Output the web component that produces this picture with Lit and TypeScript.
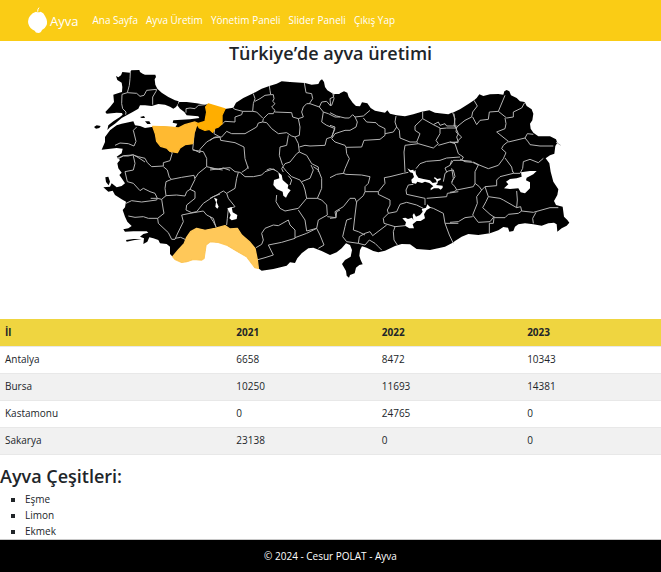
import { LitElement, html, svg, css } from "lit";
import { customElement } from "lit/decorators.js";

interface Sheet {
  x: number;
  y: number;
  borders: string[];
}

// Moves a list of "x,y" points from a map sheet to the full map.
const place = (dx: number, dy: number, points: string): string =>
  points
    .split(" ")
    .map((p) => {
      const [x, y] = p.split(",").map(Number);
      return `${x + dx},${y + dy}`;
    })
    .join(" ");

const thrace = place(270, 186,
  "78,42 85,46 93,40 97,30 120,32 124,25 148,24 150,30 158,35 165,38 196,38 198,45 194,52 196,68 202,80 215,92 235,105 255,115 266,118 264,125 258,135 250,140 240,134 225,128 205,126 185,132 165,130 150,130 145,140 128,150 110,160 95,168 75,185 60,196 52,204 55,190 70,178 90,165 98,158 96,153 80,152 50,155 46,150 60,135 72,120 70,98 88,92 96,90 97,75 95,62 82,54");

const anatolia = [
  place(270, 186, "268,120 290,120 320,124 345,128 355,126 390,138"),
  place(630, 186, "45,141 70,137 78,122 100,108 130,94 155,80 178,72 200,65 215,58 240,60 285,63 305,68 325,66 330,56 336,52 342,60 345,75 352,85 370,96 388,96"),
  place(990, 186, "30,94 42,88 52,92 56,105 68,122 78,132 90,133 96,121 112,124 122,138 135,146 165,152 172,145 180,155 200,160 225,163 250,157 275,149 298,145 315,152 355,157 365,152"),
  place(1350, 246, "8,92 30,82 55,66 72,55 80,48 88,37 100,42 120,37 145,36 160,38 163,28 170,24 178,28 183,40 200,48 210,58 224,60 230,72 245,82 250,95 247,115 240,125 242,140 250,152 265,163 300,163 318,172 322,182 316,192 313,215 300,220"),
  place(1350, 465, "287,10 298,25 302,50 310,80 325,103 322,120 312,138 318,150 338,155 342,185 352,195 358,203 350,212 335,220 322,230 320,208 312,203 295,205 275,212 250,208 225,205 205,208 195,215 190,228 178,230 174,218 160,216 145,226 120,235 85,240 55,237 35,245 15,258 8,263"),
  place(990, 495, "345,245 300,255 260,252 240,238 215,237 195,243 165,257 145,262 130,258 110,248 96,244 90,255 88,272 92,285 98,298 88,300 78,308 74,325 60,330 57,338 50,332 48,318 36,297 45,285 62,275 66,255 60,240 48,235 35,250 20,262 0,270"),
  place(630, 495, "335,258 310,248 295,250 275,265 262,280 255,294 240,292 230,302 190,312 155,317 145,310 135,308 125,295 110,275 80,258 50,240 25,232 0,230"),
  place(270, 450, "348,285 342,325 335,330 310,328 290,335 275,337 255,328 248,320 240,312 240,290 230,282 210,280 205,270 190,265 178,262 172,275 160,282 162,265 150,260 160,252 175,248 170,244 130,244 105,245 100,238 115,235 125,228 112,215 105,200 98,180 105,172 108,155 95,148 75,135 68,122 55,125 40,112 60,110 65,100 80,112 95,108 105,100 95,85 88,75 95,68 85,55 82,40 90,30 80,20 95,10"),
  place(270, 186, "98,260 80,258 35,263 45,240 45,225 60,205 80,190 95,185 130,178 135,190 150,192 165,198 185,195 200,193 235,195 255,198 262,185 248,182 250,175 275,173 300,172 328,168 325,163 290,160 283,150 270,140 262,130"),
].join(" ");

const islands = [
  place(270, 186, "12,195 20,190 32,192 28,198 18,200"),
  place(270, 186, "150,165 162,162 165,168 155,168"),
  place(270, 186, "165,178 178,178 182,186 172,186"),
  place(270, 450, "46,82 55,80 60,95 56,106 48,96"),
  place(270, 450, "108,270 130,267 155,267 130,271 110,275"),
];

const lakes = [
  place(1350, 465, "162,100 175,88 168,80 180,72 200,70 215,65 213,52 240,48 260,48 250,58 230,68 228,76 240,82 240,100 225,115 212,112 205,100 180,102"),
  place(630, 495, "205,22 215,30 218,45 235,60 233,70 242,76 234,86 228,98 220,92 218,80 200,72 190,60 192,45 208,40"),
  place(630, 495, "12,98 22,102 20,112 26,125 22,131 16,125 18,112"),
  place(630, 495, "52,130 65,126 68,142 82,150 80,162 65,166 58,160 62,150"),
  place(990, 495, "232,10 242,16 250,14 252,20 256,14 258,28 265,38 280,42 300,46 308,54 320,52 318,44 312,40 314,36 322,42 332,40 332,44 324,48 322,56 318,60 338,62 338,68 332,74 326,70 312,70 302,76 302,70 310,64 298,54 285,50 276,54 262,50 258,56 246,54 244,44 252,36 248,24 240,22"),
  place(990, 495, "217,160 226,158 234,162 246,158 250,165 248,150 252,145 258,155 270,150 278,140 275,132 288,128 292,118 302,128 290,135 282,148 285,160 272,168 260,168 248,178 252,190 238,190 225,182 228,172"),
];

const producers = [
  {
    name: "bursa",
    points: place(270, 186, "188,193 235,195 265,198 285,188 315,180 322,183 312,215 308,245 285,248 270,258 262,272 240,268 230,258 212,253 200,238 196,215"),
  },
  {
    name: "sakarya",
    points: place(270, 186, "355,126 375,132 405,141 396,160 396,185 385,195 375,198 368,211 358,202 345,205 328,198 320,186 345,178 350,150 347,135"),
  },
  {
    name: "antalya",
    points: place(270, 450, "248,320 265,300 283,280 290,262 302,245 320,235 345,241 375,235 405,227 420,237 442,235 455,255 480,277 495,295 502,330 505,355 495,353 485,340 470,320 440,303 410,285 385,277 360,275 348,285 342,325 335,330 310,328 290,335 275,337 255,328"),
  },
];

const sheets: Sheet[] = [
  { x: 270, y: 186, borders: [
    "121,30 120,50 118,70 112,92 96,97 95,125 98,140 108,150 107,158",
    "112,92 140,94 150,103 162,100 170,85 200,82 198,88 188,105 188,128",
    "288,152 288,140 300,138 315,140 325,130 345,128",
    "75,250 90,243 115,245 132,252 138,238 130,205 140,195",
    "320,185 312,215 310,245 308,262 330,272 330,262 350,240 370,228 390,225",
    "85,290 100,282 115,282 130,278 150,290 165,300",
  ] },
  { x: 270, y: 450, borders: [
    "82,25 100,17 128,15 145,20 165,25 172,38 185,50 220,48 220,38 240,32 247,8 235,0",
    "130,18 135,40 130,60 105,65 112,95 130,100 150,122 160,115 180,125 195,130 202,145 182,145",
    "108,160 125,152 155,156 200,150 202,145 215,148",
    "228,137 225,115 228,95 245,88 275,82 312,76 315,88 300,118 290,125 285,138 260,135 228,137 215,148",
    "220,50 232,60 238,82 245,88",
    "300,118 315,125 315,145 290,165 288,180 305,188 320,185 340,160 370,140 390,132",
    "215,148 220,180 222,190 203,205 205,220 235,248 245,268 255,268 262,252 280,215 275,195 300,190 340,183 350,195 370,205 378,232",
    "115,198 135,202 160,200 175,205 203,205",
    "255,265 272,262 285,268",
    "308,0 340,5 350,25 350,50 385,58 398,60",
    "350,50 325,70 315,85",
  ] },
  { x: 630, y: 186, borders: [
    "130,95 135,110 130,125 128,148 98,148 75,142 68,137",
    "98,148 95,158 75,165 75,180 45,178 38,185",
    "178,72 180,85 182,98 165,100 150,110 135,118",
    "182,98 190,98 192,110 188,118 195,125 185,135 195,145 190,155 175,155 160,170 158,180",
    "128,148 140,150 158,168",
    "195,150 245,152 248,165 265,170 280,165 275,150 280,135 290,125 300,125 328,135",
    "283,63 288,92 305,95 308,110 298,125",
    "328,135 335,120 350,118 362,132 360,110 370,105 372,96",
    "328,135 340,150 335,180 350,190 375,200 365,225 350,230 345,250 300,252 285,250 268,255",
    "340,150 355,155 375,165 390,165",
    "265,170 270,195 268,220 255,225 265,245 268,270 260,275 240,300 225,305 215,320 220,330",
    "158,180 170,182 185,200 205,215 230,212 245,222 255,225",
    "235,220 230,250 210,255 208,280 218,310",
    "158,180 145,183 140,195 105,215 65,215 50,208 35,225 15,225 0,235",
    "38,185 15,195 12,215 30,225 32,235 75,242 102,255 105,290 115,320",
    "0,318 25,322 40,318 60,325",
    "268,270 290,280 305,305 325,315 325,330",
    "170,324 180,320 195,324",
  ] },
  { x: 630, y: 495, borders: [
    "0,15 38,10 60,8 75,20 90,22 105,35 130,35 155,30 165,20 190,12 205,22",
    "85,22 80,40 75,70 50,85 40,78 20,90 0,100",
    "115,5 110,12 95,22",
    "50,85 55,100 75,125 55,132 52,160 50,180",
    "0,155 10,170 18,185",
    "235,32 245,45 240,60",
    "218,5 230,20 245,35 270,45 280,60 285,75 290,100 265,130 225,138 210,130 198,110 200,90",
    "275,50 300,40 310,15 303,0",
    "310,5 325,15 335,40 335,70 322,100 290,100",
    "322,100 335,105 350,120 352,150 325,165 320,190 290,198 285,165 265,135",
    "352,155 378,158 380,140 390,135",
    "138,248 155,238 160,225 155,205 165,190 190,180 205,182 235,165 240,180 255,195 255,220 215,232 175,240 190,270 165,278 140,285",
    "255,218 290,205 320,190 330,210 342,240 325,250",
  ] },
  { x: 990, y: 186, borders: [
    "8,92 12,110 5,130 0,130",
    "0,152 20,162 45,168 58,168 68,158 75,165 100,162 120,145",
    "75,165 82,180 78,195 60,205 45,205 15,215 5,230 15,240 45,250 48,256 95,255 102,235 150,232 165,220 165,200 145,190 138,182 110,180 100,168",
    "165,215 190,210 200,195 195,180 198,162",
    "200,195 208,205 210,228 240,240 260,240",
    "278,149 278,170 255,192 255,205 270,215 260,240 265,245 310,258 325,245 318,235 330,215 330,198 310,188 278,170",
    "310,188 325,180 330,190 345,185 350,192 375,192 372,155",
    "330,200 350,198 378,198 385,192",
    "375,192 385,215 380,225 385,240",
    "325,250 360,240 385,242",
    "0,190 15,195 5,225",
    "48,256 50,275 58,290 45,320 40,335",
    "265,245 225,250 222,270 225,330",
    "258,320 270,305 290,298 330,295 350,288 390,285",
    "365,295 360,310 345,318 350,330",
  ] },
  { x: 990, y: 495, borders: [
    "0,38 20,28 40,25 48,28 95,30 120,35 115,55 105,65 105,80 145,80 165,55 163,38 180,35 220,25 235,22",
    "145,80 145,88 180,105 180,120 172,135 175,145 200,140 210,118 230,112 260,120 280,130",
    "175,145 160,160 162,175 195,185 190,200 192,225 202,240",
    "105,80 100,92 80,110 75,150 70,195 85,200 105,210",
    "0,160 18,158 15,140 40,125 60,100 75,100 80,112",
    "65,160 50,165 45,185 38,215 50,230 85,235 88,215 105,205 120,200 128,212 170,180",
    "195,185 225,182",
    "85,235 105,240 118,225 135,235 145,245 155,255",
    "250,58 235,60 228,75 230,88 285,100 285,120",
    "290,100 350,95 352,85 385,80",
    "292,125 310,130 340,145 345,175 358,210 370,235",
    "345,175 385,175",
    "340,50 345,25 355,18 370,15 375,35 365,50",
  ] },
  { x: 1350, y: 246, borders: [
    "72,55 82,72 68,90 65,105 45,115 20,135 18,150 35,165 20,180 5,182",
    "68,105 80,128 90,115 115,112 118,90 145,88 165,40",
    "145,88 170,108 190,105 190,90 215,78 224,62",
    "165,108 168,125 165,140 140,150 175,178 160,190 155,200 168,212 160,230 145,250 115,260 90,250 70,240",
    "175,180 225,168 232,155 250,157",
    "225,168 235,180 240,188 270,192 310,192",
    "8,92 15,110 12,132 20,132",
    "0,180 15,185 25,215 40,225 35,235 10,235 0,250",
    "35,235 65,238",
    "165,228 185,255 188,270",
    "318,180 332,190",
  ] },
  { x: 1350, y: 465, borders: [
    "30,12 45,20 68,22 85,30 75,50 75,85",
    "190,50 190,55 150,65 140,75 140,92 105,95 95,105 88,95 75,85 70,95 20,105 15,95 5,85 10,70 5,40",
    "0,112 12,110 20,105",
    "190,55 210,55 218,40 220,20 240,13 265,23 280,10",
    "105,95 115,125 150,130 160,135 200,158 202,135 200,108",
    "200,158 212,155 215,168 205,175 175,178 165,188 135,188 120,178 98,158 108,140 115,125",
    "95,105 80,125 82,145 68,180 85,202 120,200 132,185",
    "0,202 25,200 45,188 68,185",
    "132,188 130,205 118,205 118,235",
    "215,168 250,172 300,158 325,158",
    "258,172 248,190 250,205",
  ] },
];

const years = ["2021", "2022", "2023"];

const production = [
  { city: "Antalya", values: [6658, 8472, 10343] },
  { city: "Bursa", values: [10250, 11693, 14381] },
  { city: "Kastamonu", values: [0, 24765, 0] },
  { city: "Sakarya", values: [23138, 0, 0] },
];

@customElement("turkey-map")
class TurkeyMap extends LitElement {
  static styles = css`
    :host { display: block; }
    .map { display: block; width: 100%; height: auto; }
    .land { fill: #000; }
    .water { fill: #fff; }
    .borders { fill: none; stroke: #b4b4b4; stroke-width: 3; stroke-linejoin: round; }
    .producer { stroke-width: 4; stroke-linejoin: round; }
    .bursa { fill: #ffba31; stroke: #ffba31; }
    .sakarya { fill: #ffae00; stroke: #ffae00; }
    .antalya { fill: #ffc859; stroke: #ffc859; }
  `;

  render() {
    return html`
      <svg class="map" viewBox="0 198 1983 759" role="img" aria-label="Türkiye haritası">
        <g class="land">
          <polygon points=${thrace}></polygon>
          <polygon points=${anatolia}></polygon>
          ${islands.map((p) => svg`<polygon points=${p}></polygon>`)}
        </g>
        ${sheets.map((s) => svg`
          <g class="borders" transform="translate(${s.x} ${s.y})">
            ${s.borders.map((b) => svg`<polyline points=${b}></polyline>`)}
          </g>`)}
        <g class="water">${lakes.map((p) => svg`<polygon points=${p}></polygon>`)}</g>
        ${producers.map((p) => svg`<polygon class="producer ${p.name}" points=${p.points}></polygon>`)}
      </svg>
    `;
  }
}

@customElement("app-root")
class AppRoot extends LitElement {
  static styles = css`
    :host {
      display: flex;
      flex-direction: column;
      min-height: 100vh;
      font: 10px/15px "Open Sans", "Noto Sans", sans-serif;
      color: #212529;
      background: #fff;
    }
    .bar {
      display: flex;
      align-items: center;
      gap: 14px;
      height: 41px;
      padding: 0 28px;
      background: #facc15;
      color: #fff;
    }
    a { color: inherit; text-decoration: none; }
    .brand { display: flex; align-items: center; gap: 3px; font-size: 13px; line-height: 20px; }
    .logo { display: block; width: 19px; height: 27px; }
    .links { display: flex; gap: 8px; font-weight: 500; }
    h1, h2 { margin: 0; font-size: 18px; line-height: 24px; font-weight: 600; }
    h1 { text-align: center; padding-bottom: 1px; }
    table { width: 100%; border-collapse: collapse; table-layout: fixed; }
    .city { width: 35%; }
    .year { width: 22%; }
    .year:last-child { width: auto; }
    th, td {
      box-sizing: border-box;
      height: 27px;
      padding: 0 5px;
      text-align: left;
      font-weight: 400;
      border-bottom: 1px solid #e8e8e8;
    }
    thead th { background: #efd540; font-weight: 700; }
    tbody tr:nth-child(even) { background: #f1f1f1; }
    h2 { margin: 9px 0 3px; }
    ul { margin: 0; padding-left: 25px; list-style: square; }
    li { line-height: 16px; }
    footer {
      margin-top: auto;
      padding: 9px 0 8px;
      text-align: center;
      font-weight: 500;
      color: #fff;
      background: #000;
      border-top: 1px solid #c8c8c8;
    }
  `;

  render() {
    return html`
      <nav class="bar">
        <a class="brand" href="#">
          <svg class="logo" viewBox="0 0 57 81" aria-hidden="true">
            <path d="M29 14 Q29 5 33 2" fill="none" stroke="#fff" stroke-width="3"></path>
            <path d="M24 14 Q30 18 38 14 Q47 17 51 27 Q60 42 56 54 Q52 64 42 69 Q39 78 31 78 Q22 78 20 71 Q5 65 1 50 Q-2 36 6 27 Q13 16 24 14Z" fill="#fff"></path>
          </svg>
          <span>Ayva</span>
        </a>
        <div class="links">
          <a href="#">Ana Sayfa</a>
          <a href="#">Ayva Üretim</a>
          <a href="#">Yönetim Paneli</a>
          <a href="#">Slider Paneli</a>
          <a href="#">Çıkış Yap</a>
        </div>
      </nav>
      <main>
        <h1>Türkiye’de ayva üretimi</h1>
        <turkey-map></turkey-map>
        <table>
          <thead>
            <tr>
              <th class="city" scope="col">İl</th>
              ${years.map((y) => html`<th class="year" scope="col">${y}</th>`)}
            </tr>
          </thead>
          <tbody>
            ${production.map((row) => html`
              <tr>
                <th scope="row">${row.city}</th>
                ${row.values.map((v) => html`<td>${v}</td>`)}
              </tr>`)}
          </tbody>
        </table>
        <h2>Ayva Çeşitleri:</h2>
        <ul>
          <li>Eşme</li>
          <li>Limon</li>
          <li>Ekmek</li>
        </ul>
      </main>
      <footer>© 2024 - Cesur POLAT - Ayva</footer>
    `;
  }
}
